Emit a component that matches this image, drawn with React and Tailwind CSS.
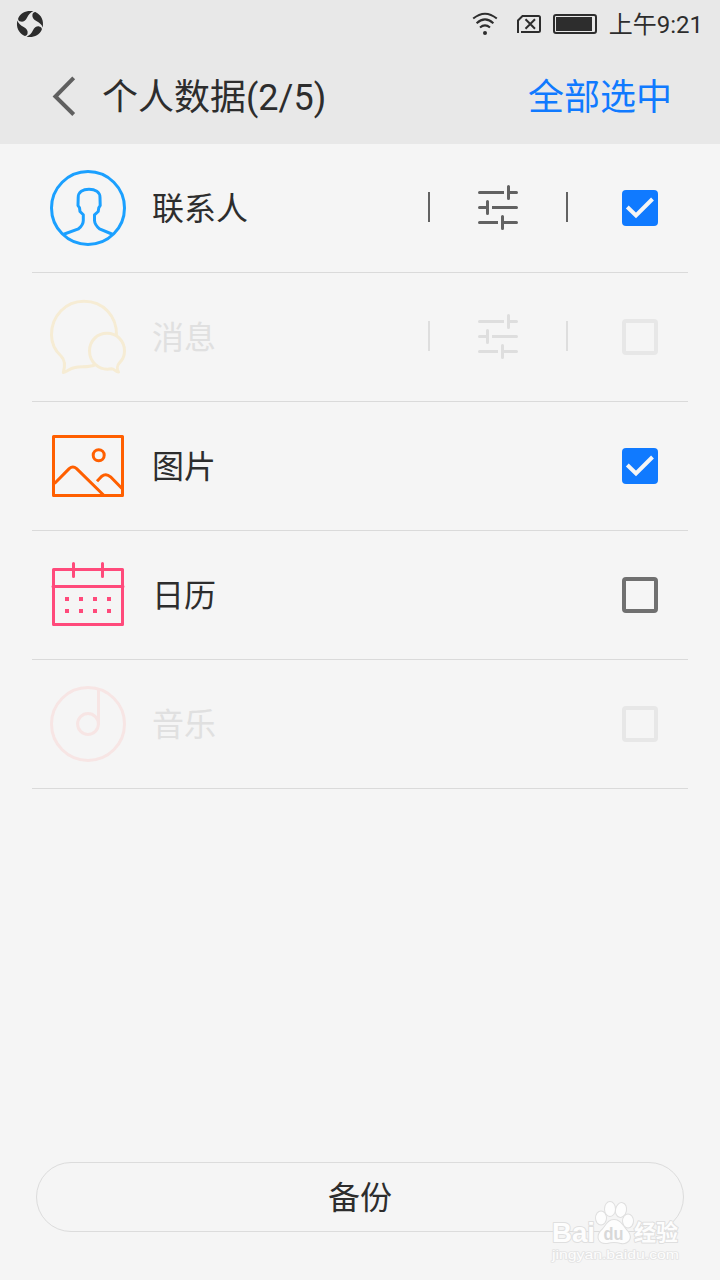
import React from "react";

function Swirl() {
  return (
    <svg width="28" height="28" viewBox="-14 -14 28 28" fill="#2d2d2d">
      {[0, 90, 180, 270].map((a) => (
        <path
          key={a}
          transform={`rotate(${a})`}
          d="M-11.8 -5.8C-9 -11.6 -3 -14 3.4 -12.7C.4 -11.6 -1.4 -9.4 -3 -6.3C-4.4 -3.4 -6.6 -2 -9.2 -2.4C-11.2 -2.8 -12.2 -4.2 -11.8 -5.8Z"
        />
      ))}
    </svg>
  );
}

function StatusBar() {
  return (
    <div className="flex h-12 items-center pl-4 pr-[18px] text-[#2d2d2d]">
      <Swirl />
      <svg className="ml-auto" width="26" height="24" viewBox="0 0 26 24" fill="none" stroke="currentColor" strokeWidth="2">
        <path d="M1.2 6.6Q13 -3.2 24.8 6.6M4.6 11.2Q13 3.6 21.4 11.2M8 15.6Q13 11.2 18 15.6" />
        <circle cx="13" cy="21" r="2" fill="currentColor" stroke="none" />
      </svg>
      <svg className="ml-[18px]" width="26" height="20" viewBox="0 0 26 20" fill="none" stroke="currentColor" strokeWidth="2">
        <path d="M2 19V6.5L6.5 2H22.5Q24 2 24 3.5V16.5Q24 18 22.5 18H5M9.5 5.2L19 14.8M19 5.2L9.5 14.8" />
      </svg>
      <div className="ml-[11px] h-5 w-11 rounded-[3px] border-2 border-[#2d2d2d] py-px pl-px pr-[3px]">
        <div className="h-full w-full bg-[#2d2d2d]" />
      </div>
      <span className="mt-0.5 -mr-px ml-3 text-2xl leading-none">上午9:21</span>
    </div>
  );
}

function ContactIcon() {
  return (
    <svg width="76" height="76" viewBox="0 0 76 76" fill="none" stroke="#1ba0ff" strokeWidth="3" strokeLinejoin="round">
      <circle cx="38" cy="38" r="36.5" />
      <path d="M13 64.5L28.5 58.8Q33.3 55 33.3 50.5V44.8L30 41.5L29.5 37.8L28 35.5L28.2 27.5C28.2 22 33 19.3 39 19.3S50 22 50 27.5L50.2 35.5L48.8 37.8L48.2 41.5L44.5 44.8V50.5Q44.8 55 49.5 58.8L63 64.5" />
    </svg>
  );
}

function MessageIcon() {
  return (
    <svg width="76" height="76" viewBox="0 0 76 76" fill="none" stroke="#f6ecd4" strokeWidth="3" strokeLinejoin="round">
      <path d="M66.5 36.5C67 17 53 2.3 34 2.3C15.5 2.3 1.5 17 1.5 35.5C1.5 45 5.5 52 11 57C15 61 15.3 67 13.3 73.5C17 73 19 69.5 25 68.5C32 67.3 38 68.5 44.8 66" />
      <path d="M61.5 69.8C49 72.3 39.5 63 39.5 52C39.5 42 47 34.3 57 34.3S74.5 42 74.5 52C74.5 57 72.5 61 69.5 63.8C67.5 66 66.5 70 68.5 73C65.5 73 64.5 69.8 61.5 69.8Z" />
    </svg>
  );
}

function PictureIcon() {
  return (
    <svg width="76" height="76" viewBox="0 0 76 76" fill="none" stroke="#ff5f00" strokeWidth="3" strokeLinejoin="round">
      <rect x="3.5" y="8.5" width="69" height="59" />
      <circle cx="48.7" cy="27.3" r="5.5" />
      <path d="M4.5 55.5L19.2 40.6Q22.8 37.4 26.6 40.6L53.5 67M47 53.2L51.5 48.5Q56 44.8 60.5 48.8L72 60.5" />
    </svg>
  );
}

function CalendarIcon() {
  return (
    <svg width="76" height="76" viewBox="0 0 76 76" fill="none" stroke="#ff4a7b" strokeWidth="3" strokeLinejoin="round">
      <rect x="3.5" y="12.5" width="69" height="55" />
      <path d="M3 29.5H73M23.5 6.5V19.5M52.5 6.5V19.5" strokeLinecap="round" />
      <path d="M15 42H61M15 54H61" strokeWidth="4" strokeDasharray="4 10" />
    </svg>
  );
}

function MusicIcon() {
  return (
    <svg width="76" height="76" viewBox="0 0 76 76" fill="none" stroke="#f7e5e4" strokeWidth="3">
      <circle cx="38" cy="38" r="36.5" />
      <circle cx="38" cy="38" r="10.4" />
      <path d="M48.5 3.5V39" />
    </svg>
  );
}

function Options({ disabled }) {
  return (
    <div className={`flex items-center ${disabled ? "text-[#dedede]" : "text-[#626262]"}`}>
      <div className="mb-0.5 h-[30px] w-0.5 bg-current" />
      <svg className="mx-12" width="40" height="46" viewBox="0 0 40 46" stroke="currentColor" strokeWidth="3">
        <path d="M1.5 7.5H24M32 7.5H38.5M30.5 1.5V13.5M1.5 22.5H8M16 22.5H38.5M9.5 16.5V28.5M1.5 37.5H18M26 37.5H38.5M24.5 31.5V43.5" strokeLinecap="round" />
        <path d="M22 7.5H26M14 22.5H18M16 37.5H20" />
      </svg>
      <div className="mb-0.5 h-[30px] w-0.5 bg-current" />
    </div>
  );
}

function CheckBox({ checked, disabled }) {
  if (checked) {
    return (
      <div className="h-9 w-9 rounded bg-[#107aff]">
        <svg width="36" height="36" viewBox="0 0 36 36" fill="none" stroke="#f5f5f5" strokeWidth="4">
          <path d="M5.3 17L14 25.5L30.5 9" />
        </svg>
      </div>
    );
  }
  return <div className={`h-9 w-9 rounded border-4 ${disabled ? "border-[#e7e7e7]" : "border-[#707070]"}`} />;
}

const items = [
  { label: "联系人", Icon: ContactIcon, options: true, checked: true },
  { label: "消息", Icon: MessageIcon, options: true, disabled: true },
  { label: "图片", Icon: PictureIcon, checked: true },
  { label: "日历", Icon: CalendarIcon },
  { label: "音乐", Icon: MusicIcon, disabled: true },
];

function Watermark() {
  return (
    <svg className="absolute right-[36px] bottom-[12px]" width="136" height="70" viewBox="0 0 136 70" fill="#fdfdfd" stroke="#dfdfdf" strokeWidth="2" paintOrder="stroke" strokeLinejoin="round">
      <text x="4" y="44" fontSize="28" fontWeight="700" textLength="43" lengthAdjust="spacingAndGlyphs" className="font-['Liberation_Sans',sans-serif]">Bai</text>
      <ellipse cx="53" cy="20" rx="5" ry="6.5" />
      <ellipse cx="62" cy="11" rx="5" ry="7" />
      <ellipse cx="73" cy="12" rx="5" ry="7" transform="rotate(12 73 12)" />
      <ellipse cx="80" cy="23" rx="5" ry="6.5" />
      <path d="M66 22C73 22 75 29 80 34C85 41 79 46 73 45Q66 43 59 45C51 46 48 39 53 33C58 29 59 22 66 22Z" />
      <text x="55.5" y="42" fontSize="19" fontWeight="700" fill="#d8d8d8" stroke="none" textLength="20" lengthAdjust="spacingAndGlyphs" className="font-['Liberation_Sans',sans-serif]">du</text>
      <text x="86" y="42" fontSize="22" fontWeight="700" className="font-['Noto_Sans_CJK_SC',sans-serif]">经验</text>
      <text x="4" y="61" fontSize="13" strokeWidth="1.6" stroke="#e4e4e4" textLength="127" lengthAdjust="spacingAndGlyphs" className="font-['Liberation_Sans',sans-serif]">jingyan.baidu.com</text>
    </svg>
  );
}

export default function App() {
  return (
    <div className="relative flex h-[1280px] w-[720px] flex-col overflow-hidden bg-[#f5f5f5] font-['Roboto','Noto_Sans_CJK_SC',sans-serif] text-[#2d2d2d]">
      <header className="h-36 bg-[#e8e8e8]">
        <StatusBar />
        <div className="flex h-24 items-center pr-12 pl-[52px] text-4xl leading-none">
          <svg width="24" height="40" viewBox="0 0 24 40" fill="none" stroke="#606060" strokeWidth="4">
            <path d="M21.7 1.8L3.4 20.5L21.7 38.5" />
          </svg>
          <h1 className="mt-1 ml-[26px] grow">个人数据(2/5)</h1>
          <button className="mt-1 text-[#107aff]">全部选中</button>
        </div>
      </header>
      <ul className="mx-8 grow">
        {items.map(({ label, Icon, options, checked, disabled }) => (
          <li key={label} className="flex h-[129px] items-center border-b border-[#dadada] pr-[30px] pl-[18px]">
            <Icon />
            <span className={`mt-0.5 ml-[26px] grow text-[32px] leading-none ${disabled ? "text-[#e0e0e0]" : ""}`}>{label}</span>
            {options && <Options disabled={disabled} />}
            <div className="ml-[54px]">
              <CheckBox checked={checked} disabled={disabled} />
            </div>
          </li>
        ))}
      </ul>
      <button className="mx-9 mb-12 h-[70px] rounded-full border border-[#dcdcdc] pt-0.5 text-[32px] leading-none">备份</button>
      <Watermark />
    </div>
  );
}
